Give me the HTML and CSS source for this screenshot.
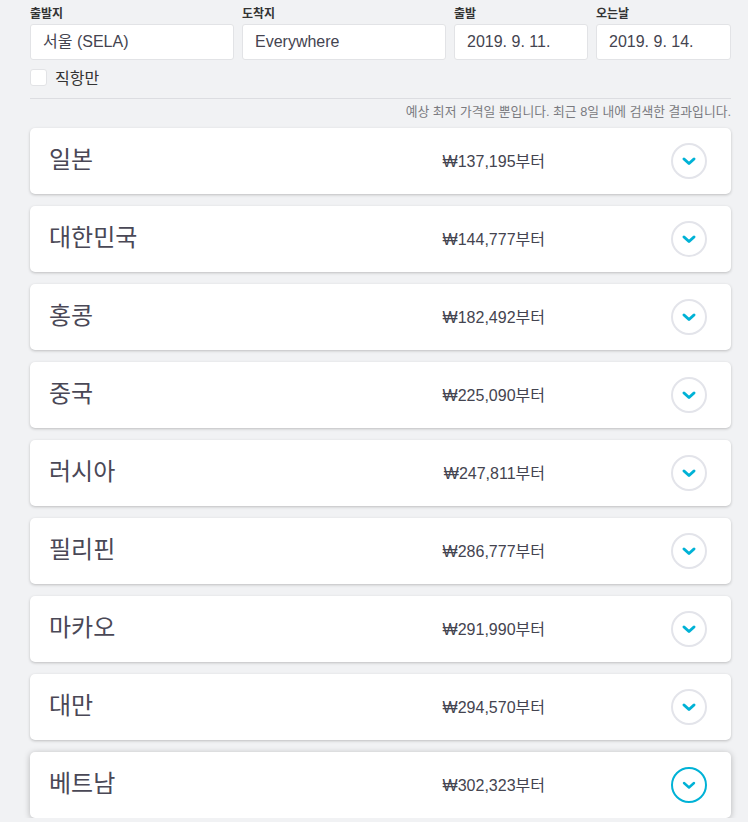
FILE: index.html
```html
<!DOCTYPE html>
<html lang="ko">
<head>
<meta charset="utf-8">
<link rel="stylesheet" href="styles.css">
</head>
<body>
<div class="page">
  <div class="search">
    <div class="field f-wide">
      <div class="label">출발지</div>
      <div class="input">서울 (SELA)</div>
    </div>
    <div class="field f-wide">
      <div class="label">도착지</div>
      <div class="input">Everywhere</div>
    </div>
    <div class="field f-date">
      <div class="label">출발</div>
      <div class="input">2019. 9. 11.</div>
    </div>
    <div class="field f-date">
      <div class="label">오는날</div>
      <div class="input">2019. 9. 14.</div>
    </div>
  </div>
  <label class="direct"><span class="box"></span><span>직항만</span></label>
  <div class="sep"></div>
  <div class="note">예상 최저 가격일 뿐입니다. 최근 8일 내에 검색한 결과입니다.</div>
  <div class="list">
    <div class="card"><div class="name">일본</div><div class="price">₩137,195부터</div><div class="toggle"><svg viewBox="0 0 20 20" width="20" height="20"><path d="M5 8 L10 12.5 L15 8" /></svg></div></div>
    <div class="card"><div class="name">대한민국</div><div class="price">₩144,777부터</div><div class="toggle"><svg viewBox="0 0 20 20" width="20" height="20"><path d="M5 8 L10 12.5 L15 8" /></svg></div></div>
    <div class="card"><div class="name">홍콩</div><div class="price">₩182,492부터</div><div class="toggle"><svg viewBox="0 0 20 20" width="20" height="20"><path d="M5 8 L10 12.5 L15 8" /></svg></div></div>
    <div class="card"><div class="name">중국</div><div class="price">₩225,090부터</div><div class="toggle"><svg viewBox="0 0 20 20" width="20" height="20"><path d="M5 8 L10 12.5 L15 8" /></svg></div></div>
    <div class="card"><div class="name">러시아</div><div class="price">₩247,811부터</div><div class="toggle"><svg viewBox="0 0 20 20" width="20" height="20"><path d="M5 8 L10 12.5 L15 8" /></svg></div></div>
    <div class="card"><div class="name">필리핀</div><div class="price">₩286,777부터</div><div class="toggle"><svg viewBox="0 0 20 20" width="20" height="20"><path d="M5 8 L10 12.5 L15 8" /></svg></div></div>
    <div class="card"><div class="name">마카오</div><div class="price">₩291,990부터</div><div class="toggle"><svg viewBox="0 0 20 20" width="20" height="20"><path d="M5 8 L10 12.5 L15 8" /></svg></div></div>
    <div class="card"><div class="name">대만</div><div class="price">₩294,570부터</div><div class="toggle"><svg viewBox="0 0 20 20" width="20" height="20"><path d="M5 8 L10 12.5 L15 8" /></svg></div></div>
    <div class="card hover"><div class="name">베트남</div><div class="price">₩302,323부터</div><div class="toggle"><svg viewBox="0 0 20 20" width="20" height="20"><path d="M5 8 L10 12.5 L15 8" /></svg></div></div>
  </div>
</div>
</body>
</html>
```

FILE: styles.css
```css
html, body {
  margin: 0;
  padding: 0;
  background: #f1f2f4;
}
body {
  font-family: "Liberation Sans", Arial, "Noto Sans CJK KR", sans-serif;
  color: #444450;
  overflow: hidden;
}
.page {
  padding: 7px 17px 0 30px;
}
.search {
  display: flex;
  gap: 8px;
}
.field {
  display: flex;
  flex-direction: column;
}
.f-wide { width: 204px; }
.f-date { width: 134px; }
.f-date:last-child { width: 135px; }
.label {
  font-size: 12px;
  font-weight: bold;
  color: #333;
  line-height: 15px;
  height: 17px;
}
.input {
  height: 34px;
  background: #fff;
  border: 1px solid #e2e3e6;
  border-radius: 3px;
  font-size: 16px;
  line-height: 34px;
  padding-left: 12px;
  color: #444450;
}
.direct {
  display: flex;
  align-items: center;
  gap: 8px;
  margin-top: 8px;
  height: 19px;
  font-size: 16px;
  color: #333;
}
.direct span:last-child {
  position: relative;
  top: -1px;
}
.box {
  width: 15px;
  height: 15px;
  background: #fff;
  border: 1px solid #e2e3e6;
  border-radius: 3px;
}
.sep {
  height: 1px;
  background: #dcdde1;
  margin-top: 11px;
}
.note {
  text-align: right;
  font-size: 12.8px;
  color: #7a7a80;
  margin-top: 5px;
  line-height: 15px;
}
.list {
  display: flex;
  flex-direction: column;
  gap: 12px;
  margin-top: 9px;
}
.card {
  height: 66px;
  background: #fff;
  border-radius: 5px;
  box-shadow: 0 1px 3px rgba(0, 0, 0, 0.22);
  display: flex;
  align-items: center;
  padding: 0 24px 0 19px;
}
.card.hover {
  box-shadow: 0 1px 6px rgba(0, 0, 0, 0.25);
}
.name {
  flex: 1;
  font-size: 24px;
  color: #4a4856;
  padding-bottom: 7px;
}
.price {
  font-size: 16px;
  color: #444450;
  margin-right: 126px;
  padding-bottom: 3px;
}
.toggle {
  width: 32px;
  height: 32px;
  border: 2px solid #e3e4ea;
  border-radius: 50%;
  display: flex;
  align-items: center;
  justify-content: center;
}
.toggle path {
  fill: none;
  stroke: #00b2d6;
  stroke-width: 3;
  stroke-linecap: round;
  stroke-linejoin: round;
}
.card.hover .toggle {
  border-color: #00b2d6;
}
.card.hover .toggle path {
  stroke-width: 2.4;
}
```
